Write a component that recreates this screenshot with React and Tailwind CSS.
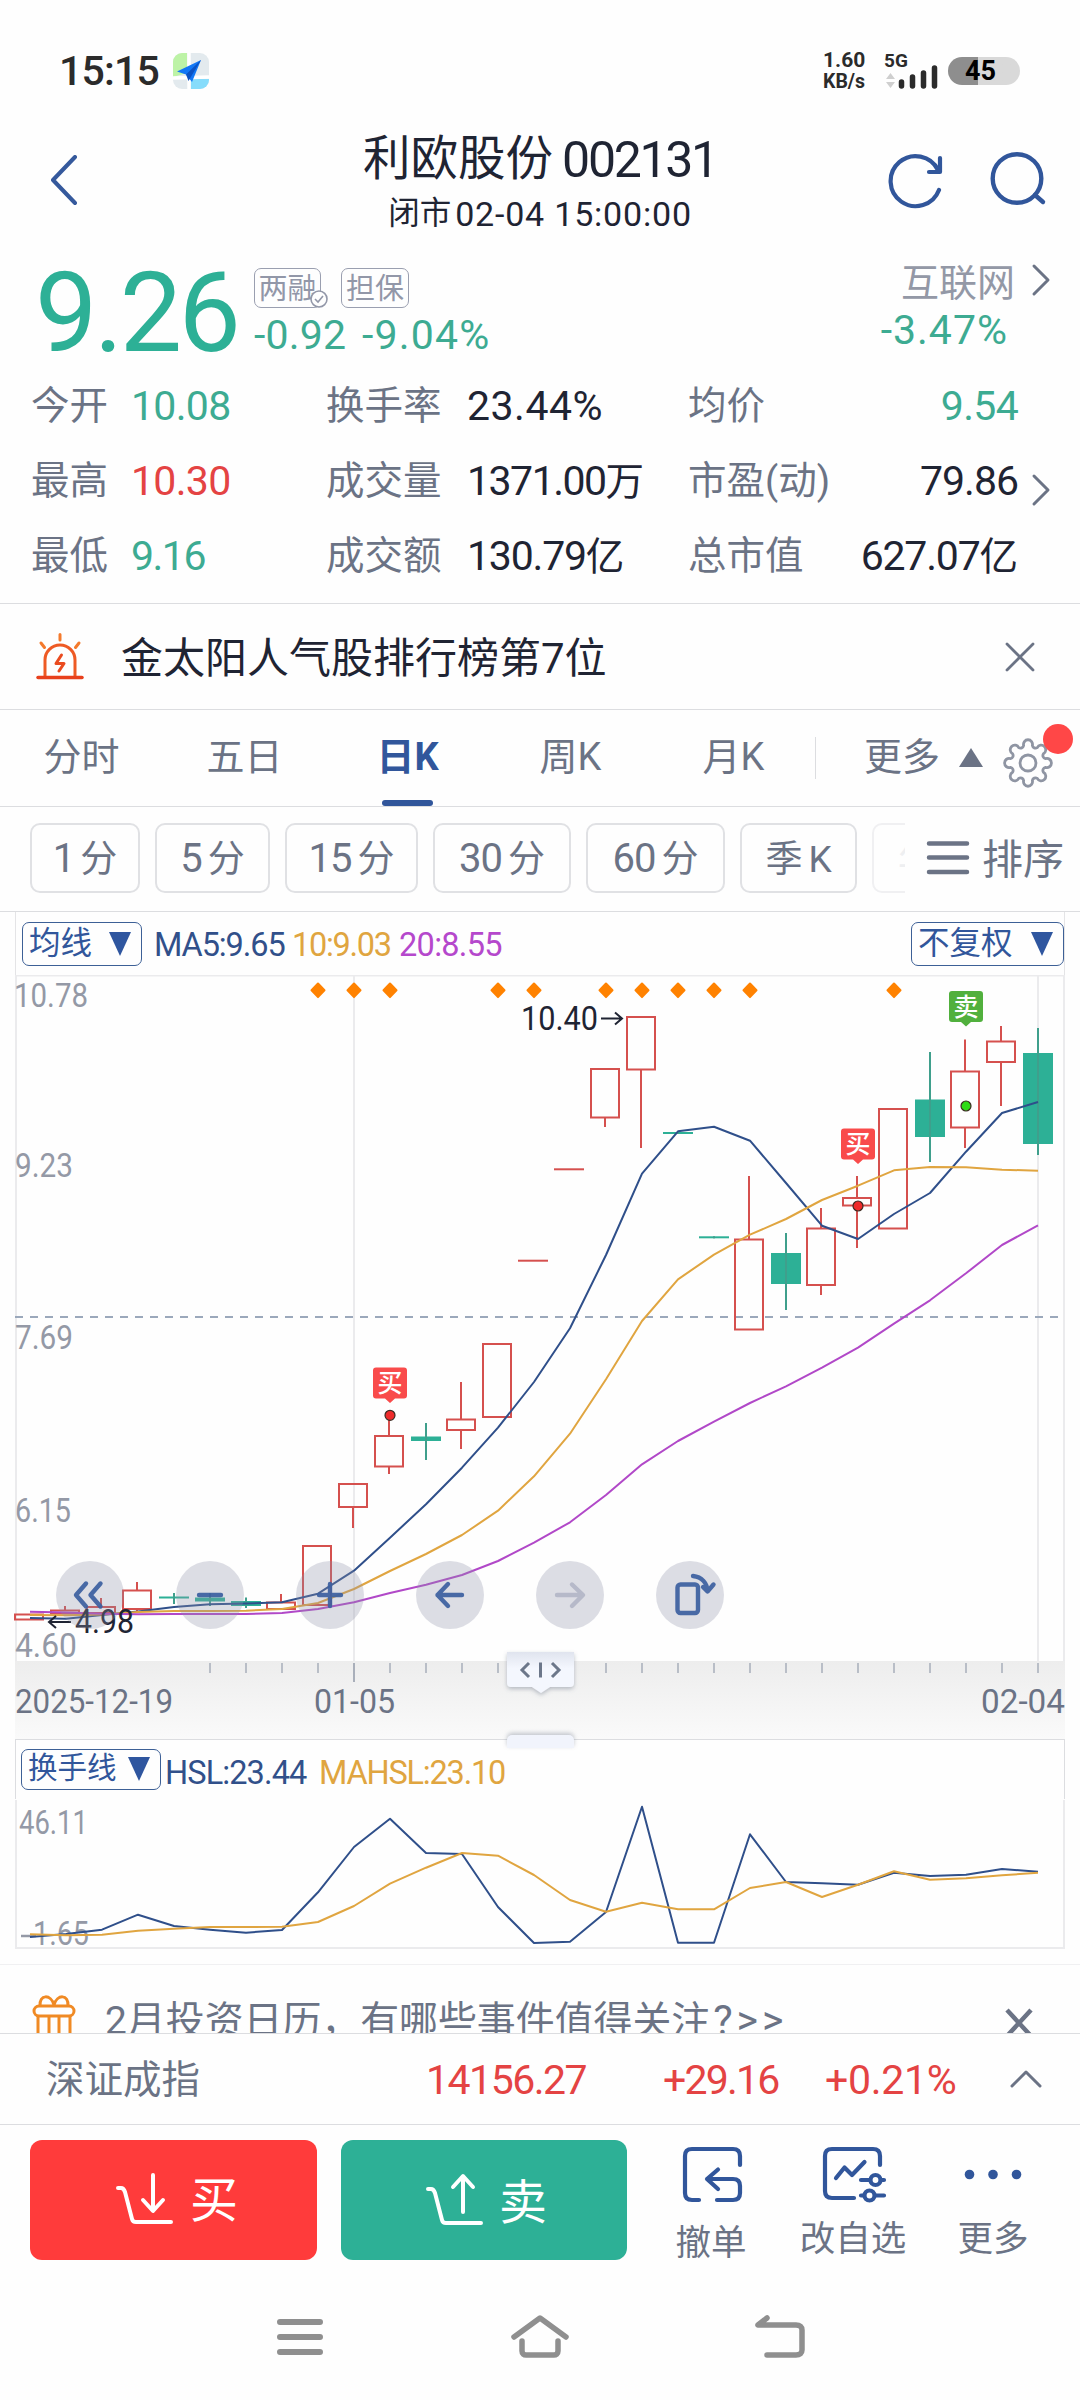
import React from "react";

const X0 = 354;
const STEP = 36;
const kx = (k) => X0 + STEP * k;

const diamonds = [-1, 0, 1, 4, 5, 7, 8, 9, 10, 11, 15];

// [slot, type, bodyTop, bodyBottom, wickTop, wickBottom]
const candles = [
  [-9, "r", 1614.5, 1619.5, 1614.5, 1619.5],
  [-8, "r", 1610.5, 1613.5, 1606, 1614],
  [-7, "r", 1607, 1613, 1598, 1613],
  [-6, "r", 1590.5, 1609, 1582, 1612],
  [-5, "g", 1596.5, 1598.5, 1593, 1604],
  [-4, "g", 1597.5, 1601.5, 1593, 1606],
  [-3, "g", 1601, 1606, 1597.5, 1608],
  [-2, "r", 1602.5, 1609, 1594, 1609],
  [-1, "r", 1546, 1605, 1546, 1605],
  [0, "r", 1484, 1507, 1484, 1528],
  [1, "r", 1436, 1466.5, 1418, 1474],
  [2, "g", 1436.5, 1441, 1423, 1460],
  [3, "r", 1419.5, 1430, 1382, 1449],
  [4, "r", 1344, 1417, 1344, 1417],
  [5, "r", 1260.7, 1260.7, 1260, 1261],
  [6, "r", 1169.3, 1169.3, 1169, 1170],
  [7, "r", 1069, 1117.5, 1069, 1127],
  [8, "r", 1017, 1069.5, 1017, 1148],
  [9, "g", 1132, 1134, 1132, 1134],
  [10, "g", 1236.3, 1238.3, 1236.3, 1238.3],
  [11, "r", 1239.5, 1329.5, 1176, 1329.5],
  [12, "g", 1253, 1284, 1233, 1310],
  [13, "r", 1228.5, 1285, 1208, 1295],
  [14, "r", 1198, 1205.5, 1176, 1248],
  [15, "r", 1109, 1228.5, 1109, 1228.5],
  [16, "g", 1099.5, 1137, 1052, 1162],
  [17, "r", 1071.5, 1127.5, 1039.5, 1148],
  [18, "r", 1041.5, 1062, 1026, 1106],
  [19, "g", 1053, 1144, 1028, 1155],
];

const ma5 = [1618, 1618.7, 1615, 1611.5, 1607, 1604.3, 1603.5, 1602.3, 1593.7, 1570.7, 1537.7, 1504.3, 1467.7, 1427.7, 1382, 1328.3, 1255, 1173.7, 1131.3, 1126.7, 1140.7, 1183, 1225.7, 1239, 1214, 1193, 1151.7, 1113, 1102];
const ma10 = [1615, 1615.3, 1614.5, 1612, 1611, 1611, 1610.7, 1609, 1603, 1589, 1571, 1554, 1535, 1510.7, 1476.3, 1433.7, 1379.3, 1321, 1279.3, 1254.7, 1234.7, 1219, 1200, 1185.7, 1170.3, 1167, 1167.3, 1169.7, 1170.7];
const ma20 = [1611.7, 1612.5, 1613.7, 1614.3, 1614, 1614, 1614, 1613, 1609, 1602.3, 1593, 1584.7, 1575, 1561, 1542.7, 1522.3, 1495, 1464.3, 1441, 1421.7, 1403, 1386.3, 1367.7, 1347.7, 1323.7, 1300.3, 1273.3, 1245, 1225.3];
const hsl = [1937, 1934, 1929.7, 1914.7, 1926, 1929.7, 1932.7, 1930, 1892.3, 1847, 1818.7, 1853, 1854, 1907, 1943, 1941.7, 1912, 1806.7, 1942.7, 1942.7, 1834.3, 1882, 1883.3, 1884.7, 1872.7, 1876, 1874.7, 1869, 1871.7];
const mahsl = [1934.3, 1935.3, 1934.7, 1930.7, 1928.7, 1927, 1927, 1926.7, 1922, 1906, 1883.7, 1867.7, 1853, 1855.7, 1875, 1900, 1911.7, 1902.7, 1909.3, 1909.3, 1888, 1882, 1897, 1884.7, 1871.3, 1879.7, 1878.3, 1875.3, 1872.7];

const pts = (a) => a.map((y, i) => `${kx(i - 9)},${y}`).join(" ");

// eight round teeth joined by short concave arcs
const gearPath = (() => {
  const p = (deg) => {
    const a = (deg * Math.PI) / 180;
    return `${(25 + 18 * Math.cos(a)).toFixed(2)} ${(25 + 18 * Math.sin(a)).toFixed(2)}`;
  };
  let d = `M${p(-14)}`;
  for (let i = 0; i < 8; i++) {
    d += `A4.5 4.6 0 1 1 ${p(i * 45 + 14)}A3.2 3.2 0 0 0 ${p(i * 45 + 31)}`;
  }
  return d + "z";
})();

function Line({ data, color }) {
  return <polyline points={pts(data)} fill="none" stroke={color} strokeWidth="2" strokeLinejoin="round" />;
}

function Label({ x, y, w, color = "#9499a6", size = 32.5, children }) {
  return (
    <text x={x} y={y} fontSize={size} fill={color} textLength={w} lengthAdjust="spacingAndGlyphs">
      {children}
    </text>
  );
}

function Candle({ c }) {
  const [k, type, t, b, wt, wb] = c;
  const cx = kx(k) - (type === "r" ? 1 : 0);
  if (type === "g") {
    return (
      <g fill="#2db096">
        <rect x={cx - 15} y={t} width="30" height={b - t} />
        <rect x={cx - 1} y={wt} width="2" height={wb - wt} fill="#3f9f8c" />
      </g>
    );
  }
  return (
    <g stroke="#d5504e" strokeWidth="2" fill="none">
      {wt < t && <path d={`M${cx} ${wt}V${t}`} />}
      {wb > b && <path d={`M${cx} ${b}V${wb}`} />}
      {b - t < 1 ? <path d={`M${cx - 15} ${t}H${cx + 15}`} /> : <rect x={cx - 14} y={t} width="28" height={b - t} />}
    </g>
  );
}

function Marker({ cx, top, color, dotY, dotColor, children }) {
  return (
    <g>
      <path
        d={`M${cx - 14} ${top}h28a3 3 0 0 1 3 3v25a3 3 0 0 1 -3 3h-9l-5 4.500l-5 -4.500h-9a3 3 0 0 1 -3 -3v-25a3 3 0 0 1 3 -3z`}
        fill={color}
      />
      <text x={cx} y={top + 24.5} fontSize="25" fontWeight="500" fill="#fff" textAnchor="middle">
        {children}
      </text>
      <circle cx={cx} cy={dotY} r="5" fill={dotColor} stroke="#3b2a22" strokeWidth="1.2" />
    </g>
  );
}

function KChart() {
  return (
    <svg className="block shrink-0" width="1080" height="764" viewBox="0 975 1080 764">
      <defs>
        <linearGradient id="axis" x1="0" y1="0" x2="0" y2="1">
          <stop offset="0" stopColor="#ededed" />
          <stop offset="1" stopColor="#fafafa" />
        </linearGradient>
        <linearGradient id="knob" x1="0" y1="0" x2="0" y2="1">
          <stop offset="0" stopColor="#e0e4ee" />
          <stop offset="0.4" stopColor="#f4f7fe" />
        </linearGradient>
        <filter id="sh" x="-20%" y="-30%" width="140%" height="170%">
          <feDropShadow dx="0" dy="2" stdDeviation="2" floodColor="#5a6478" floodOpacity="0.4" />
        </filter>
      </defs>
      <g stroke="#ebebed" strokeWidth="2">
        <path d="M15 975.500H1065" />
        <path d="M16 975V1661M1064 975V1661M354 975V1661M1038 975V1661" />
      </g>
      <Label x={14} y={1006.5} w={74}>10.78</Label>
      <Label x={15} y={1177} w={58}>9.23</Label>
      <Label x={15} y={1349} w={58}>7.69</Label>
      <Label x={15} y={1522} w={56}>6.15</Label>
      <Label x={15} y={1657} w={62}>4.60</Label>
      <path d="M15 1317H1065" stroke="#9ba8bb" strokeWidth="2" strokeDasharray="8 7" />
      {diamonds.map((k) => (
        <path key={k} d={`M${kx(k)} 983.500l6.500 6.800l-6.500 6.800l-6.500 -6.800z`} fill="#ff8200" stroke="#ff8200" strokeWidth="2" strokeLinejoin="round" />
      ))}
      {candles.map((c) => (
        <Candle key={c[0]} c={c} />
      ))}
      <Line data={ma5} color="#2f4f8a" />
      <Line data={ma10} color="#e0a540" />
      <Line data={ma20} color="#b148c8" />
      <Label x={521} y={1030} w={77} color="#1f2433">10.40</Label>
      <path d="M601 1018.500H621M615 1012.500l7 6l-7 6" fill="none" stroke="#1f2433" strokeWidth="2" />
      <Label x={75} y={1632.500} w={59} color="#1f2433">4.98</Label>
      <path d="M71 1622H50M56 1616l-7 6l7 6" fill="none" stroke="#1f2433" strokeWidth="2" />
      <Marker cx={966} top={991} color="#51b03d" dotY={1106} dotColor="#2fdc16">卖</Marker>
      <Marker cx={858} top={1128.500} color="#f94b4b" dotY={1206} dotColor="#ef2b2b">买</Marker>
      <Marker cx={390} top={1367.500} color="#f94b4b" dotY={1415.300} dotColor="#ef2b2b">买</Marker>

      {[90, 210, 330, 450, 570, 690].map((x) => (
        <circle key={x} cx={x} cy="1595" r="34" fill="#8f92a8" fillOpacity="0.3" />
      ))}
      <g fill="none" stroke="#3c60a0" strokeOpacity="0.93" strokeWidth="4.400" strokeLinecap="round" strokeLinejoin="round">
        <path d="M86 1583.500L76 1595l10 11.500M100.500 1583.500L90.500 1595l10 11.500" />
        <path d="M199 1595H221" />
        <path d="M319 1595H341M330 1584V1606" />
        <path d="M448 1584L437.500 1595l10.500 11M437.500 1595H462" />
        <rect x="677.500" y="1584.500" width="20.500" height="28.500" rx="3" />
        <path d="M693 1576C702 1577 707 1583 707.500 1591M703 1587l4.500 4.500l6 -7" />
      </g>
      <path d="M557 1595H582.500M572 1584.500l11 10.500l-11 11" fill="none" stroke="#b6b9c9" strokeWidth="4.400" strokeLinecap="round" strokeLinejoin="round" />

      <rect x="15" y="1661" width="1050" height="78" fill="url(#axis)" />
      {Array.from({ length: 24 }, (_, i) => i - 4).map((k) => (
        <path key={k} d={`M${kx(k)} 1663V${k === 0 ? 1682 : 1673}`} stroke={k === 0 ? "#a9afba" : "#b9bec7"} strokeWidth="2" />
      ))}
      <Label x={15} y={1712.500} w={158} color="#6b7385">2025-12-19</Label>
      <Label x={314} y={1712.500} w={81} color="#6b7385">01-05</Label>
      <Label x={981} y={1712.500} w={84} color="#6b7385">02-04</Label>
      <path d="M507 1652H574V1683a4 4 0 0 1 -4 4H550l-9 6l-9 -6H511a4 4 0 0 1 -4 -4z" fill="url(#knob)" filter="url(#sh)" />
      <path d="M529 1663l-7 7l7 7M540.500 1662.500V1677.500M552 1663l7 7l-7 7" fill="none" stroke="#6c778a" strokeWidth="3" />
    </svg>
  );
}

function HslChart() {
  return (
    <svg className="block shrink-0" width="1080" height="152" viewBox="0 1799 1080 152">
      <path d="M16 1800V1948H1064V1800" fill="none" stroke="#ebebed" strokeWidth="2" />
      <Label x={19} y={1834} w={69}>46.11</Label>
      <path d="M21 1936H36" stroke="#9499a6" strokeWidth="2.500" />
      <Label x={33} y={1945} w={56}>1.65</Label>
      <Line data={hsl} color="#2f4f8a" />
      <Line data={mahsl} color="#e0a540" />
    </svg>
  );
}

function Selector({ label, className }) {
  return (
    <div className={`flex items-center justify-between rounded-[7px] border-[1.5px] border-[#3d6096] pl-[6px] pr-[10px] leading-none text-[#31569b] ${className}`}>
      <span>{label}</span>
      <svg width="22" height="24" viewBox="0 0 22 24">
        <path d="M0 0H22L11 24z" fill="#2f569f" />
      </svg>
    </div>
  );
}

function Chevron({ className = "" }) {
  return (
    <svg className={className} width="20" height="34" viewBox="0 0 20 34" fill="none" stroke="#6b7385" strokeWidth="3" strokeLinecap="round" strokeLinejoin="round">
      <path d="M3 3L17 17L3 31" />
    </svg>
  );
}

const G = "text-[#3dab92]";
const R = "text-[#e44343]";
const D = "text-[#1f2433]";

const stats = [
  [["今开", "10.08", "", G, ""], ["换手率", "23.44%", "", D, "tracking-[0.500px]"], ["均价", "9.54", "", G, ""]],
  [["最高", "10.30", "", R, ""], ["成交量", "1371.00", "万", D, "tracking-[-1.500px]"], ["市盈(动)", "79.86", "", D, "tracking-[-1px]"]],
  [["最低", "9.16", "", G, "tracking-[-1.500px]"], ["成交额", "130.79", "亿", D, "tracking-[-1.200px]"], ["总市值", "627.07", "亿", D, "tracking-[-1.200px]"]],
];

function Value({ s, className = "" }) {
  return (
    <span className={`${s[3]} ${className}`}>
      <span className={`text-[41px] ${s[4] || "tracking-[-0.700px]"}`}>{s[1]}</span>
      {s[2]}
    </span>
  );
}

const chips = [
  ["1", "分", "w-[110px]"],
  ["5", "分", "w-[115px]"],
  ["15", "分", "w-[133px]"],
  ["30", "分", "w-[138px]"],
  ["60", "分", "w-[139px]"],
  ["季", "K", "w-[117px]"],
];

export default function App() {
  return (
    <div className="flex h-[2400px] w-[1080px] flex-col overflow-hidden bg-[#fefefe] font-[Roboto,'Noto_Sans_CJK_SC',sans-serif] whitespace-nowrap text-[#6b7385]">
      {/* status bar */}
      <div className="flex h-[128px] shrink-0 items-center pt-[14px] pl-[59px]">
        <span className="w-[114px] text-[41px] font-medium leading-none tracking-[-0.800px] text-[#2b2b2b]">15:15</span>
        <svg width="36" height="36" viewBox="0 0 36 36">
          <defs>
            <clipPath id="appclip"><rect width="36" height="36" rx="9" /></clipPath>
          </defs>
          <g clipPath="url(#appclip)">
            <rect width="36" height="36" fill="#e3eaee" />
            <path d="M0 0H14V20L0 24z" fill="#bdf3a6" />
            <path d="M18 26H36V36H18z" fill="#86dcfb" />
            <path d="M0 25L36 24M16 0V36" stroke="#fff" strokeWidth="3.500" />
          </g>
          <path d="M28 7L4 18.500L13 21.500L19 29z" fill="#1277f5" />
          <path d="M28 7L13 21.500L15.500 28L19 22z" fill="#0a52c4" />
        </svg>
        <div className="ml-[614px] w-[60px] text-[21px] font-bold leading-[21px] text-[#2b2b2b]">
          <div>1.60</div>
          <div className="text-[19.500px]">KB/s</div>
        </div>
        <div className="flex w-[65px] flex-col">
          <span className="-mt-[2px] h-[22px] pl-[1px] text-[19px] font-bold leading-[20px] text-[#2b2b2b]">5G</span>
          <svg className="-mt-[8px]" width="56" height="24" viewBox="0 0 56 24">
            <path d="M3 14L7.500 8L12 14zM3 17L7.500 23L12 17z" fill="#cfcfcf" />
            <g stroke="#2b2b2b" strokeWidth="5.500" strokeLinecap="round">
              <path d="M18.500 17V21M29.500 12V21M40.500 8V21M51.500 3V21" />
            </g>
          </svg>
        </div>
        <div className="flex h-[28px] w-[72px] items-center justify-center rounded-full bg-linear-to-r from-[#8e8e8e] from-42% to-[#d9d9d9] to-42% text-[27px] font-bold leading-none text-black">
          <span className="pr-[7px]">45</span>
        </div>
      </div>

      {/* title bar */}
      <div className="flex h-[108px] shrink-0 items-center justify-between pl-[48px] pr-[32px]">
        <svg width="32" height="54" viewBox="0 0 32 54" fill="none" stroke="#35599c" strokeWidth="4" strokeLinecap="round" strokeLinejoin="round">
          <path d="M27 2L5 25L27 48" />
        </svg>
        <div className="ml-[114px] w-[400px] text-center text-[#1f2433]">
          <div className="flex h-[64px] items-center justify-center text-[47.500px] leading-none">
            <span>利欧股份</span>
            <span className="ml-[9px] text-[50px] tracking-[-2.300px]">002131</span>
          </div>
          <div className="flex h-[44px] items-center justify-center text-[31.500px] leading-none">
            <span>闭市</span>
            <span className="ml-[4px] text-[34px] tracking-[0.800px]">02-04 15:00:00</span>
          </div>
        </div>
        <div className="flex gap-[42px] text-[#31569b]">
          <svg width="60" height="60" viewBox="0 0 60 60" fill="none" stroke="currentColor" strokeWidth="4.200" strokeLinecap="round" strokeLinejoin="round">
            <path d="M53 38A25 25 0 1 1 52 18M54 6V20H43" />
          </svg>
          <svg width="60" height="60" viewBox="0 0 60 60" fill="none" stroke="currentColor" strokeWidth="4.400" strokeLinecap="round">
            <circle cx="29" cy="26.500" r="24.300" />
            <path d="M47 43L55 50" />
          </svg>
        </div>
      </div>

      {/* quote */}
      <div className="flex h-[132px] shrink-0 items-start pt-[25px]">
        <span className="flex h-[104px] w-[254px] items-center pl-[35px] text-[111px] leading-none tracking-[-3.500px] text-[#2db096]">9.26</span>
        <div className="flex flex-1 flex-col pt-[7px]">
          <div className="flex h-[40px] gap-[20px] text-[29px] text-[#9297a8]">
            <div className="relative flex w-[67px] items-center justify-center rounded-[7px] border-[1.500px] border-[#9a9fb0] pt-[2px] leading-none">
              两融
              <svg className="absolute -right-[9px] top-[20px]" width="20" height="20" viewBox="0 0 20 20" fill="#fefefe" stroke="#9297a8" strokeWidth="1.600">
                <circle cx="10" cy="10" r="8" />
                <path d="M6 10l3 3l5 -6" fill="none" />
              </svg>
            </div>
            <div className="flex w-[68px] items-center justify-center rounded-[7px] border-[1.500px] border-[#9a9fb0] pt-[2px] leading-none">担保</div>
          </div>
          <div className="mt-[5px] flex h-[44px] items-center text-[41px] leading-none text-[#3dab92]">
            <span className="w-[108px] tracking-[0.200px]">-0.92</span>
            <span className="tracking-[1.200px]">-9.04%</span>
          </div>
        </div>
        <div className="flex w-[150px] flex-col items-end text-right">
          <span className="flex h-[44px] items-center text-[38px] leading-none text-[#9398a6]">互联网</span>
          <span className="mt-[3px] flex h-[44px] items-center pr-[7px] text-[41px] leading-none tracking-[1px] text-[#3dab92]">-3.47%</span>
        </div>
        <Chevron className="mt-[2px] ml-[16px] mr-[29px]" />
      </div>

      {/* statistics */}
      <div className="flex h-[235px] shrink-0 flex-col pt-[1px]">
        {stats.map((row, i) => (
          <div key={i} className="flex h-[75px] shrink-0 items-center text-[38.500px] leading-none">
            <span className="w-[131px] pl-[31px]">{row[0][0]}</span>
            <Value s={row[0]} className="w-[195px]" />
            <span className="w-[141px]">{row[1][0]}</span>
            <Value s={row[1]} className="w-[221px]" />
            <span>{row[2][0]}</span>
            <Value s={row[2]} className="ml-auto" />
            <span className="flex w-[62px] pl-[13px] pt-[16px]">{i === 1 && <Chevron />}</span>
          </div>
        ))}
      </div>

      {/* notice */}
      <div className="flex h-[107px] shrink-0 items-center border-y border-[#dcdde0] pr-[44px] pl-[36px]">
        <svg width="48" height="48" viewBox="0 0 48 48" fill="none" stroke="#ee5a24" strokeWidth="3" strokeLinecap="round" strokeLinejoin="round">
          <path d="M9 43V27A15 15 0 0 1 39 27V43" />
          <path d="M2 44.500H46" stroke="#e8401c" strokeWidth="3.500" />
          <path d="M24 1.500V7M5 10L8.500 14.500M43 10L39.500 14.500" stroke="#f47a2c" />
          <path d="M25.500 22L20 30.500H28L23 38" stroke="#ea4b1f" />
        </svg>
        <span className="ml-[37px] flex-1 pt-[4px] text-[42px] leading-none text-[#1f2433]">金太阳人气股排行榜第7位</span>
        <svg width="32" height="32" viewBox="0 0 32 32" fill="none" stroke="#6b7385" strokeWidth="2.800" strokeLinecap="round">
          <path d="M3 3L29 29M29 3L3 29" />
        </svg>
      </div>

      {/* period tabs */}
      <div className="flex h-[97px] shrink-0 items-center border-b border-[#dcdde0] text-[38px] leading-none">
        {["分时", "五日", "日K", "周K", "月K"].map((t, i) => (
          <div key={t} className={`relative flex h-full w-[163px] items-center justify-center pb-[2px] ${t === "日K" ? "font-bold text-[#31569b]" : ""}`}>
            {t}
            {t === "日K" && <span className="absolute bottom-0 h-[6px] w-[51px] rounded-[3px] bg-[#31569b]" />}
          </div>
        ))}
        <span className="h-[42px] w-px bg-[#dcdde0]" />
        <span className="ml-[48px] pb-[2px]">更多</span>
        <svg className="ml-[19px]" width="24" height="20" viewBox="0 0 24 20">
          <path d="M12 0L24 19H0z" fill="#6b7385" />
        </svg>
        <div className="relative ml-[20px] h-[50px] w-[50px]">
          <svg className="mt-[5px]" width="50" height="50" viewBox="0 0 50 50" fill="none" stroke="#8f95a3" strokeWidth="2.800" strokeLinejoin="round">
            <path d={gearPath} />
            <circle cx="25" cy="25" r="8" />
          </svg>
          <span className="absolute -right-[20px] -top-[9px] h-[30px] w-[30px] rounded-full bg-[#ff4747]" />
        </div>
      </div>

      {/* minute chips */}
      <div className="flex h-[105px] shrink-0 items-start border-b border-[#dcdde0] pt-[16px] pl-[30px] text-[37px] leading-none">
        <div className="flex w-[875px] gap-[15px] overflow-hidden">
          {chips.map(([a, b, w]) => (
            <div key={a} className={`flex h-[70px] shrink-0 items-center justify-center gap-[6px] rounded-[10px] border-2 border-[#e0e1e4] pt-[2px] ${w}`}>
              <span className={a === "季" ? "" : "text-[40px] tracking-[-1px]"}>{a}</span>
              <span>{b}</span>
            </div>
          ))}
          <div className="h-[70px] w-[60px] shrink-0 rounded-[10px] border-2 border-[#f0f0f2] pt-[17px] pl-[24px] text-[#eeeff1]">年K</div>
        </div>
        <svg className="ml-[21px] mt-[16px]" width="44" height="38" viewBox="0 0 44 38" stroke="#6b7385" strokeWidth="4.500" strokeLinecap="round">
          <path d="M3 4.500H41M3 18.500H41M3 33H41" />
        </svg>
        <span className="ml-[12px] mt-[17px] text-[41px]">排序</span>
      </div>

      {/* moving average legend */}
      <div className="mx-[15px] flex h-[63px] shrink-0 items-center border-x border-[#e4e4e6] pl-[6px] text-[32.500px] leading-none">
        <Selector label="均线" className="h-[44px] w-[120px] text-[31.500px]" />
        <span className="ml-[12px] mt-[3px] w-[138px] tracking-[-1.100px] text-[#31508a]">MA5:9.65</span>
        <span className="mt-[3px] w-[107px] tracking-[-1.300px] text-[#e0a540]">10:9.03</span>
        <span className="mt-[3px] tracking-[-0.700px] text-[#b548cc]">20:8.55</span>
        <Selector label="不复权" className="ml-auto h-[44px] w-[153px] text-[31.500px]" />
      </div>

      <KChart />

      {/* turnover legend */}
      <div className="relative mx-[15px] flex h-[60px] shrink-0 items-center border border-b-0 border-[#dcdde0] pl-[5px] text-[32.500px] leading-none">
        <Selector label="换手线" className="-mt-[1px] h-[41px] w-[140px] text-[29.500px]" />
        <span className="ml-[4px] mt-[8px] w-[154px] tracking-[-0.900px] text-[#31508a]">HSL:23.44</span>
        <span className="mt-[8px] tracking-[-1.200px] text-[#e0a540]">MAHSL:23.10</span>
        <span className="absolute -top-[5px] left-[491px] h-[13px] w-[67px] rounded-t-[5px] bg-[#f1f4fc] shadow-[0_-2px_4px_rgba(90,100,120,0.35)]" />
      </div>

      <HslChart />

      {/* calendar promo, cut off by the index bar */}
      <div className="mt-[13px] flex h-[69px] shrink-0 items-start overflow-hidden border-t border-[#f0f0f2]">
        <svg className="ml-[31px] mt-[29px] shrink-0" width="46" height="50" viewBox="0 0 46 50" fill="none" stroke="#f08a24" strokeWidth="3" strokeLinejoin="round">
          <path d="M9 12C8 0 20 0 23 11C26 0 38 0 37 12" />
          <rect x="3" y="12" width="40" height="10" rx="5" />
          <path d="M7 22V48H39V22M18 23V48M28 23V48" />
        </svg>
        <span className="ml-[28px] mt-[35px] text-[38.900px] leading-[40px]">
          2月投资日历，有哪些事件值得关注
          <span className="ml-[3px] text-[41px] tracking-[4px]">?&gt;&gt;</span>
        </span>
        <svg className="ml-auto mr-[45px] mt-[42px] shrink-0" width="32" height="32" viewBox="0 0 32 32" fill="none" stroke="#6b7385" strokeWidth="4.500">
          <path d="M4 3L28 29M28 3L4 29" />
        </svg>
      </div>

      {/* index bar */}
      <div className="flex h-[92px] shrink-0 items-center border-y border-[#dcdde0] text-[41px] leading-none text-[#e44343]">
        <span className="w-[426px] pl-[46px] pt-[2px] text-[38.500px] text-[#6b7385]">深证成指</span>
        <span className="w-[237px] pt-[3px] tracking-[-1.500px]">14156.27</span>
        <span className="w-[162px] pt-[3px] tracking-[-1.800px]">+29.16</span>
        <span className="pt-[3px] tracking-[-0.300px]">+0.21%</span>
        <svg className="ml-auto mr-[37px]" width="34" height="20" viewBox="0 0 34 20" fill="none" stroke="#6b7385" strokeWidth="3" strokeLinecap="round" strokeLinejoin="round">
          <path d="M3 17L17 3L31 17" />
        </svg>
      </div>

      {/* trade bar */}
      <div className="flex h-[160px] shrink-0 items-start pt-[15px] pl-[30px]">
        <button className="flex h-[120px] w-[287px] items-center justify-center gap-[15px] rounded-[12px] bg-[#ff3b3b] pl-[6px] text-[48px] leading-none text-white">
          <svg className="-mt-[2px]" width="60" height="56" viewBox="0 0 60 56" fill="none" stroke="#fff" strokeWidth="4" strokeLinecap="round" strokeLinejoin="round">
            <path d="M3 17H6C8 17 9 18 10 21L17 48C17.500 50 18.500 51 21 51H56M38 4V39M28 29L38 40L48 29" />
          </svg>
          <span className="pt-[1px]">买</span>
        </button>
        <button className="ml-[24px] flex h-[120px] w-[286px] items-center justify-center gap-[14px] rounded-[12px] bg-[#2db096] pl-[4px] text-[48px] leading-none text-white">
          <svg width="60" height="56" viewBox="0 0 60 56" fill="none" stroke="#fff" strokeWidth="4" strokeLinecap="round" strokeLinejoin="round">
            <path d="M3 17H6C8 17 9 18 10 21L17 48C17.500 50 18.500 51 21 51H56M38 40V5M28 15L38 4L48 15" />
          </svg>
          <span className="pt-[6px]">卖</span>
        </button>
        <div className="flex flex-1 text-[35.500px] leading-none">
          <div className="ml-[48px] flex w-[72px] flex-col items-center">
            <svg className="mt-[5px]" width="64" height="60" viewBox="0 0 64 60" fill="none" stroke="#31569b" strokeWidth="4.200" strokeLinecap="round" strokeLinejoin="round">
              <path d="M20 55H13C8 55 6 52.500 6 48V11C6 6.500 8 4 13 4H54C59 4 61 6.500 61 11V20M38 55H54C59 55 61 52.500 61 48V41C61 36.500 59 34 54 34H28M39 24.500L28 34L39 44" />
            </svg>
            <span className="mt-[21px]">撤单</span>
          </div>
          <div className="ml-[50px] flex w-[112px] flex-col items-center">
            <svg className="mt-[5px]" width="68" height="60" viewBox="0 0 68 60" fill="none" stroke="#31569b" strokeWidth="4.200" strokeLinecap="round" strokeLinejoin="round">
              <path d="M35 53H13C8 53 6 50.500 6 46V11C6 6.500 8 4 13 4H54C59 4 61 6.500 61 11V20M17 33L25.500 22.500L33 30L45.500 17" />
              <path d="M42 35H50M62 35H65M42 50.500H44M57 50.500H65" />
              <circle cx="56.500" cy="35" r="5" />
              <circle cx="50.500" cy="50.500" r="5" />
            </svg>
            <span className="mt-[17px]">改自选</span>
          </div>
          <div className="ml-[44px] flex w-[80px] flex-col items-center">
            <svg className="mt-[5px]" width="60" height="60" viewBox="0 0 60 60" fill="#31569b">
              <circle cx="6.500" cy="29.500" r="4.800" />
              <circle cx="30" cy="29.500" r="4.800" />
              <circle cx="53.500" cy="29.500" r="4.800" />
            </svg>
            <span className="mt-[17px]">更多</span>
          </div>
        </div>
      </div>

      {/* system navigation */}
      <div className="flex flex-1 items-start justify-center gap-[180px] pt-[25px] text-[#8f8f8f]">
        <svg width="60" height="54" viewBox="0 0 60 54" stroke="currentColor" strokeWidth="6" strokeLinecap="round">
          <path d="M10 12H50M10 27H50M10 42H50" />
        </svg>
        <svg width="60" height="54" viewBox="0 0 60 54" fill="none" stroke="currentColor" strokeWidth="5.500" strokeLinecap="round" strokeLinejoin="round">
          <path d="M4 27L30 8L56 27M12 31V41C12 44 14 45 16 45H44C46 45 48 44 48 41V31" />
        </svg>
        <svg width="60" height="54" viewBox="0 0 60 54" fill="none" stroke="currentColor" strokeWidth="5.500" strokeLinecap="round" strokeLinejoin="round">
          <path d="M17 8L8 15H46C50 15 52 17 52 20V40C52 43 50 45 46 45H17" />
        </svg>
      </div>
    </div>
  );
}
